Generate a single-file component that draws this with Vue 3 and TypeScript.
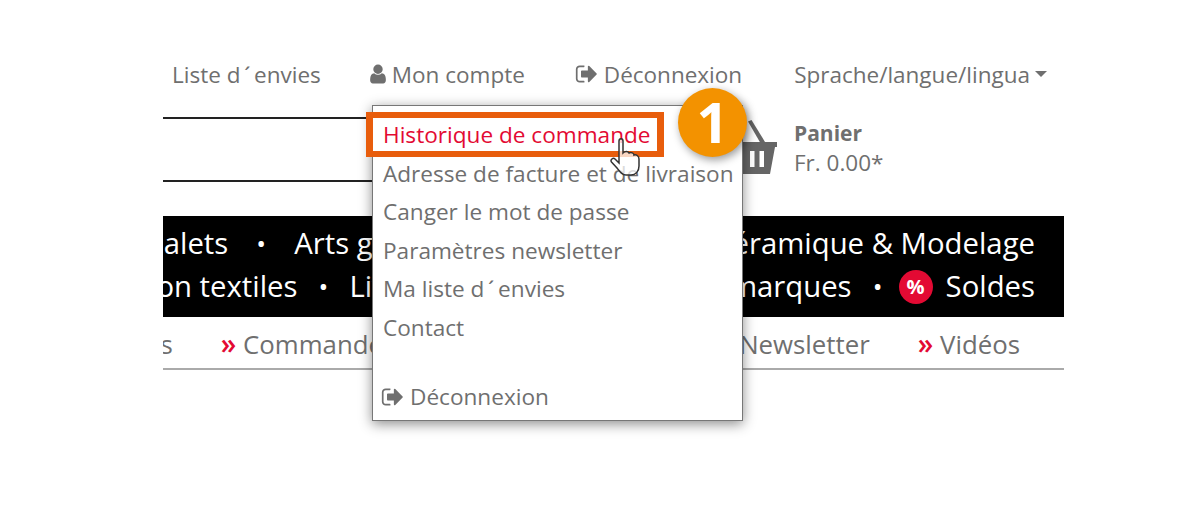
<script setup lang="ts">
const menuItems = [
  "Historique de commande",
  "Adresse de facture et de livraison",
  "Canger le mot de passe",
  "Paramètres newsletter",
  "Ma liste d\u2009´\u2009envies",
  "Contact",
];
const signOutPath = "M704 1440q0 4 1 20t.5 26.5-3 23.5-10 19.5-20.5 6.5h-320q-119 0-203.5-84.5t-84.5-203.5v-704q0-119 84.5-203.5t203.5-84.5h320q13 0 22.5 9.5t9.5 22.5q0 4 1 20t.5 26.5-3 23.5-10 19.5-20.5 6.5h-320q-66 0-113 47t-47 113v704q0 66 47 113t113 47h312l11.5 1 11.5 3 8 5.5 7 9 2 13.5zm928-544q0 26-19 45l-544 544q-19 19-45 19t-45-19-19-45v-288h-448q-26 0-45-19t-19-45v-384q0-26 19-45t45-19h448v-288q0-26 19-45t45-19 45 19l544 544q19 19 19 45z";
</script>

<template>
  <div class="page">
    <nav class="top-nav">
      <span>Liste d&thinsp;´&thinsp;envies</span>
      <span class="with-icon">
        <svg class="icon user" viewBox="0 0 1792 1792"><path d="M1536 1399q0 109-62.5 187t-150.5 78h-854q-88 0-150.5-78t-62.5-187q0-85 8.5-160.5t31.5-152 58.5-131 94-89 134.5-34.5q131 128 313 128t313-128q76 0 134.5 34.5t94 89 58.5 131 31.5 152 8.5 160.5zm-256-887q0 159-112.5 271.5t-271.5 112.5-271.5-112.5-112.5-271.5 112.5-271.5 271.5-112.5 271.5 112.5 112.5 271.5z" /></svg>
        Mon compte
      </span>
      <span class="with-icon">
        <svg class="icon signout" viewBox="0 0 1792 1792"><path :d="signOutPath" /></svg>
        Déconnexion
      </span>
      <span class="with-icon lang">
        Sprache/langue/lingua
        <i class="caret"></i>
      </span>
    </nav>

    <div class="head">
      <div class="search"></div>
      <div class="cart">
        <svg class="basket" viewBox="0 0 42 54">
          <path d="M13 1.500 L16.500 0 L30 22 L26 24 Z" />
          <path d="M0 22 H42 V27 H40 L35 54 H7 L2 27 H0 Z M15 31 V47 H19.500 V31 Z M24.500 31 V47 H29 V31 Z" fill-rule="evenodd" />
        </svg>
        <div class="cart-text">
          <strong>Panier</strong>
          <span>Fr. 0.00*</span>
        </div>
      </div>
    </div>

    <div class="band">
      <div class="band-row first">
        <span>Chalets</span><b>•</b><span>Arts graphiques &amp; Dessins</span><b>•</b><span>Céramique &amp; Modelage</span>
      </div>
      <div class="band-row">
        <span>Impression textiles</span><b>•</b><span>Livres &amp; Films</span><b>•</b><span>Toutes les marques</span><b>•</b>
        <em class="percent">%</em><span>Soldes</span>
      </div>
    </div>

    <div class="sub-nav">
      <span>Services</span>
      <span><i>»</i> Commandes</span>
      <span class="behind-menu"><i>»</i> Chèques cadeaux</span>
      <span><i>»</i> Newsletter</span>
      <span><i>»</i> Vidéos</span>
    </div>

    <div class="menu">
      <a v-for="(item, index) in menuItems" :key="item" :class="{ active: index === 0 }">{{ item }}</a>
      <a class="logout">
        <svg class="icon small" viewBox="0 0 1792 1792"><path :d="signOutPath" /></svg>
        Déconnexion
      </a>
    </div>

    <div class="highlight"></div>
    <div class="step">1</div>
    <svg class="hand" viewBox="0 0 30 38">
      <path d="M9 3 C9 0 13 0 13 3 V15 C15 13 18 13 19 15 C21 14 24 15 24 17 C26 16 29 18 29 21 V28 C29 33 26 37 21 37 H16 C12 37 10 34 7 30 L1.500 24 C0 22 3 19 5 21 L9 25 Z" />
    </svg>
  </div>
</template>

<style>
body {
  background: #fff;
}
</style>

<style scoped>
.page {
  position: relative;
  width: 901px;
  height: 521px;
  margin-left: 163px;
  font-family: "Open Sans", sans-serif;
  color: #6f6f6f;
}

.top-nav {
  display: flex;
  align-items: center;
  height: 30px;
  padding-top: 59px;
  font-size: 22.500px;
  white-space: nowrap;
}

.top-nav > span:nth-child(1) {
  margin-left: 9px;
}

.top-nav > span:nth-child(2) {
  margin-left: 46px;
}

.top-nav > span:nth-child(3) {
  margin-left: 50px;
}

.top-nav > span:nth-child(4) {
  margin-left: 52px;
}

.with-icon {
  display: flex;
  align-items: center;
  gap: 5px;
}

.icon {
  width: 24px;
  height: 24px;
  fill: #6f6f6f;
}

.icon.user {
  width: 22px;
  height: 22px;
  margin-right: -2px;
}

.icon.small {
  width: 24px;
  height: 24px;
  margin-left: -2px;
}

.caret {
  border-top: 6px solid #6f6f6f;
  border-left: 6.500px solid transparent;
  border-right: 6.500px solid transparent;
}

.head {
  display: flex;
  height: 127px;
}

.search {
  width: 300px;
  height: 65px;
  box-sizing: border-box;
  margin-top: 28px;
  border-top: 2px solid #222;
  border-bottom: 2px solid #222;
}

.cart {
  display: flex;
  margin-left: 272px;
  padding-top: 31px;
}

.basket {
  width: 42px;
  height: 54px;
  fill: #666;
}

.cart-text {
  display: flex;
  flex-direction: column;
  margin-left: 17px;
  margin-top: -1px;
  font-size: 22.500px;
  line-height: 29px;
}

.cart-text strong {
  font-size: 21px;
  font-weight: 700;
}

.band {
  height: 101px;
  padding-top: 6px;
  box-sizing: border-box;
  overflow: hidden;
  background: #000;
  color: #fff;
  font-size: 29.300px;
  line-height: 43px;
}

.band-row {
  display: flex;
  justify-content: flex-end;
  align-items: center;
  padding-right: 29px;
  white-space: nowrap;
}

.band-row > * {
  flex: none;
}

.band-row b {
  width: 10px;
  margin: 0 21px;
  text-align: center;
  font-weight: 400;
  font-size: 26px;
}

.band-row b:nth-of-type(2) {
  margin-left: 16.500px;
}

.band-row.first b {
  margin: 0 28px;
}

.band-row.first b:nth-of-type(2) {
  margin-left: 24px;
}

.band-row b:nth-last-of-type(1) {
  margin-right: 16px;
}

.band-row.first b:nth-last-of-type(1) {
  margin-right: 28px;
}

.percent {
  display: flex;
  align-items: center;
  justify-content: center;
  width: 34px;
  height: 34px;
  margin-right: 13px;
  border-radius: 50%;
  background: #e30a33;
  font-style: normal;
  font-weight: 700;
  font-size: 20px;
  line-height: 1;
}

.sub-nav {
  display: flex;
  justify-content: flex-end;
  gap: 48px;
  height: 51px;
  padding-right: 44px;
  overflow: hidden;
  border-bottom: 2px solid #aaa;
  font-size: 25.800px;
  line-height: 54px;
  white-space: nowrap;
}

.sub-nav span {
  flex: none;
}

.sub-nav .behind-menu {
  margin-left: -9px;
}

.sub-nav i {
  font-style: normal;
  font-weight: 600;
  font-size: 28px;
  line-height: 1;
  color: #e30a33;
}

.menu {
  position: absolute;
  left: 209px;
  top: 105px;
  width: 371px;
  height: 316px;
  box-sizing: border-box;
  padding: 10px 0 0 10px;
  display: flex;
  flex-direction: column;
  background: #fff;
  border: 1px solid #777;
  box-shadow: 0 3px 12px rgba(0, 0, 0, 0.45);
  font-size: 22.600px;
  line-height: 38.600px;
  white-space: nowrap;
}

.menu .active {
  color: #e30a33;
}

.menu .logout {
  display: flex;
  align-items: center;
  gap: 5px;
  margin-top: 30px;
}

.highlight {
  position: absolute;
  left: 203px;
  top: 112px;
  width: 298px;
  height: 45px;
  box-sizing: border-box;
  border: 6px solid #e85d0c;
  border-width: 6px 7px;
}

.step {
  position: absolute;
  left: 515px;
  top: 88px;
  width: 69px;
  height: 69px;
  border-radius: 50%;
  background: #f39200;
  color: #fff;
  text-align: center;
  font-size: 56px;
  font-weight: 700;
  line-height: 67px;
  box-shadow: 2px 3px 8px rgba(0, 0, 0, 0.4);
}

.hand {
  position: absolute;
  left: 447px;
  top: 138px;
  width: 30px;
  height: 38px;
  fill: rgba(255, 255, 255, 0.75);
  stroke: #333;
  stroke-width: 1.500;
}
</style>
